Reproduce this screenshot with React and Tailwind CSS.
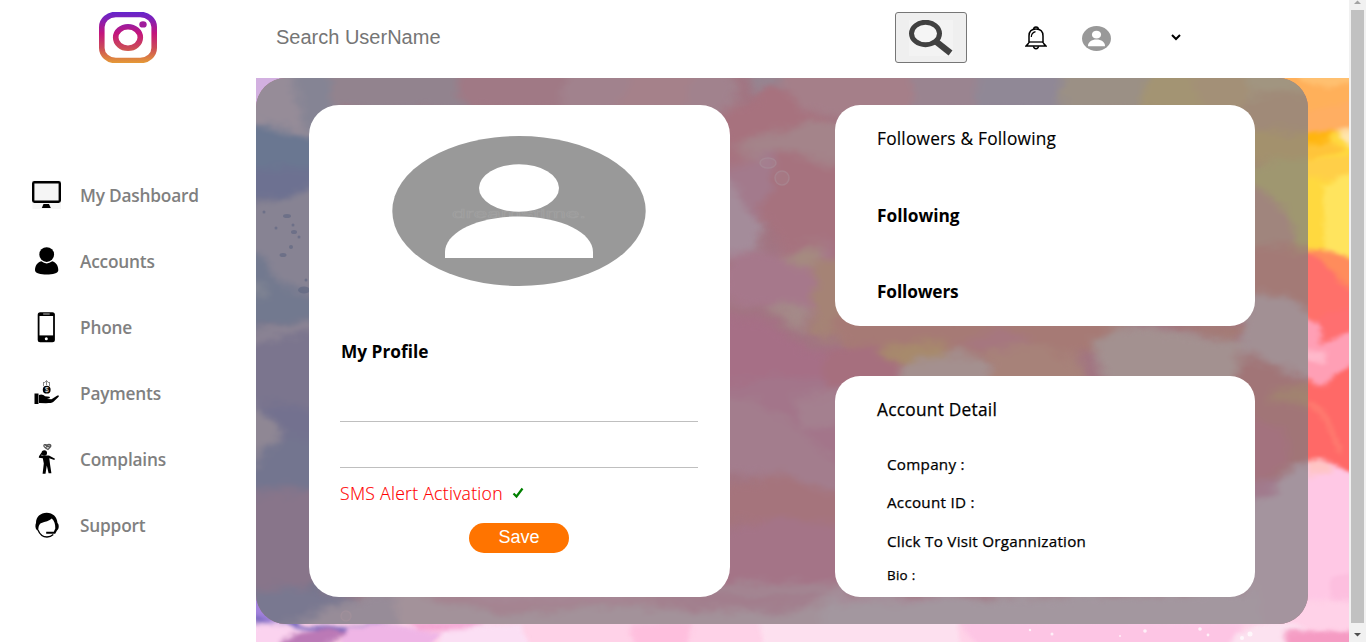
import React from "react";

const ARTBOX = "256 78 1093 564";

function PaintFilter({ id, scale, blur, soften }) {
  return (
    <filter id={id} x="-5%" y="-5%" width="110%" height="110%" colorInterpolationFilters="sRGB">
      <feGaussianBlur in="SourceGraphic" stdDeviation={blur} result="b" />
      <feTurbulence type="fractalNoise" baseFrequency="0.03 0.05" numOctaves="4" seed="8" result="n" />
      <feDisplacementMap in="b" in2="n" scale={scale} xChannelSelector="R" yChannelSelector="G" />
      <feGaussianBlur stdDeviation={soften} />
    </filter>
  );
}

function Backdrop() {
  return (
    <svg className="col-start-1 row-start-1 h-[564px] w-[1093px]" viewBox={ARTBOX} aria-hidden="true">
      <PaintFilter id="paint" scale={12} blur={2} soften={0.8} />
      <rect x="256" y="78" width="1093" height="564" fill="#ffd2e8" />
      <g filter="url(#paint)">
        <path d="M240 60H330V130H240Z" fill="#d2b0e0" />
        <path d="M1270 60H1370V155H1270Z" fill="#ffb05a" />
        <path d="M1300 80L1330 88 1370 78V60H1290Z" fill="#ffc070" />
        <path d="M1300 112L1370 95V135L1300 138Z" fill="#ffae62" />
        <path d="M1290 138L1370 130V300H1290Z" fill="#ffd93f" />
        <path d="M1290 136L1335 132 1328 140 1290 152Z" fill="#ffb50e" />
        <path d="M1290 150L1328 140 1345 148 1290 165Z" fill="#ffc43a" />
        <path d="M1338 132L1370 125V150L1345 143Z" fill="#ffe6b0" />
        <path d="M1300 160L1370 152V185L1300 176Z" fill="#ffcf48" />
        <path d="M1322 185L1370 170V260L1325 252Z" fill="#ffe45e" />
        <path d="M1290 250L1330 252 1370 272V390H1290Z" fill="#ff706a" />
        <path d="M1308 252L1336 252 1370 266V300L1340 280Z" fill="#ff8c5c" />
        <path d="M1300 315L1325 328 1332 338 1370 325V375L1322 386 1295 372Z" fill="#ff9fb5" />
        <path d="M1316 320L1370 300V325L1322 344Z" fill="#ff6f70" />
        <path d="M1300 345L1330 352 1322 364 1300 355Z" fill="#ffb9cb" />
        <path d="M1300 385L1324 383 1370 355V480L1300 480Z" fill="#ff6967" />
        <path d="M1308 400Q1330 405 1342 455L1335 448Q1328 415 1308 405Z" fill="#ff7d70" />
        <path d="M1300 465L1326 460 1345 472 1370 480V600H1300Z" fill="#ffc8e5" />
        <path d="M1308 463L1327 461 1333 472 1308 475Z" fill="#ffc5c5" />
        <path d="M1330 578L1370 568V605L1330 600Z" fill="#fdbfdf" />
        <path d="M240 550H280L300 626 390 624 330 634 250 622Z" fill="#7565bd" />
        <path d="M240 570H262L275 600 282 624 240 612Z" fill="#a282dc" />
        <path d="M250 624Q280 620 300 630L340 630 330 650H240V628Z" fill="#fbd3ef" />
        <path d="M284 636L330 628 350 632 318 650H282Z" fill="#bb79b6" />
        <path d="M345 626L400 626 440 632 430 650H340Z" fill="#efb5e6" />
        <path d="M405 620H485L470 630 415 628Z" fill="#f6a5d3" />
        <path d="M440 628L520 624 530 650H440Z" fill="#fbdff4" />
        <path d="M630 622H690V650H635Z" fill="#ffbfde" />
        <path d="M755 615H960V650H765Z" fill="#fde0ef" />
        <path d="M960 620H1240V650H980Z" fill="#fdc5e4" />
        <path d="M1235 632L1280 622 1310 630 1290 650H1230Z" fill="#fce2f0" />
        <path d="M1285 634L1370 626V650H1285Z" fill="#f59bc3" />
      </g>
      <g fill="#ffffff" opacity="0.75">
        <circle cx="1052" cy="634" r="1.5" /><circle cx="1145" cy="631" r="1.8" />
        <circle cx="1200" cy="629" r="1.8" /><circle cx="1208" cy="635" r="1.4" />
        <circle cx="1250" cy="634" r="2.5" /><circle cx="1242" cy="638" r="2" />
        <circle cx="1030" cy="630" r="1.2" /><circle cx="1120" cy="636" r="1" />
      </g>
    </svg>
  );
}

function PanelArt() {
  return (
    <svg className="col-start-1 row-start-1 h-[546px] w-[1052px]" viewBox="256 78 1052 546" aria-hidden="true">
      <PaintFilter id="muted" scale={18} blur={4} soften={1.2} />
      <rect x="256" y="78" width="1052" height="546" fill="#a27582" />
      <g filter="url(#muted)">
        {/* left edge */}
        <path d="M236 58H330V640H236Z" fill="#77758c" />
        <path d="M236 58H310L330 140 236 126Z" fill="#968c98" />
        <path d="M292 60H335V135L300 120Z" fill="#858494" />
        <path d="M236 121L285 130 330 138V180L236 168Z" fill="#6a7791" />
        <path d="M236 168L320 172 330 190 280 195 236 205Z" fill="#6d7191" />
        <path d="M236 210L285 195 330 180V300L275 285 236 240Z" fill="#878393" />
        <path d="M236 252L262 255 280 285 330 305V318L236 328Z" fill="#72798f" />
        <path d="M236 280L264 284 268 296 236 300Z" fill="#858894" />
        <path d="M236 336L330 318V328L236 345Z" fill="#908795" />
        <path d="M236 345L330 330V410L236 400Z" fill="#7b758e" />
        <path d="M236 400L330 410V445L275 440Z" fill="#73718f" />
        <path d="M236 398L262 408 284 440 255 462 236 468Z" fill="#8f8794" />
        <path d="M245 468L285 435 330 445V495H236Z" fill="#73758f" />
        <path d="M236 495L330 488V560L300 600 236 590Z" fill="#88758a" />
        <path d="M236 588L345 592 365 596 295 640H236Z" fill="#797890" />
        {/* top edge */}
        <path d="M330 60H470L500 112H330Z" fill="#92838e" />
        <path d="M455 60H570L600 112H465Z" fill="#a07985" />
        <path d="M570 60H735V115H560Z" fill="#a1828d" />
        <path d="M640 60H700L680 115H610Z" fill="#a5818a" />
        <path d="M745 60H790L800 95 750 88Z" fill="#968591" />
        <path d="M780 60H935L925 115H790Z" fill="#a57f89" />
        <path d="M910 60H1010V115H915Z" fill="#9a8490" />
        <path d="M982 60H1085L1070 115H975Z" fill="#908896" />
        <path d="M1065 60H1160V115H1060Z" fill="#9b9085" />
        <path d="M1150 60H1255L1230 115H1140Z" fill="#a39473" />
        <path d="M1190 60H1330V120H1205Z" fill="#a39077" />
        <path d="M1250 60H1330V90L1245 95Z" fill="#a19580" />
        {/* centre column */}
        <path d="M720 115L775 82 810 115 845 125V165L725 170Z" fill="#a7727e" />
        <path d="M730 150Q780 118 845 125V170L790 168Z" fill="#a4848a" />
        <path d="M715 170L775 152 790 165 770 215 740 220Z" fill="#a37a8c" />
        <path d="M782 150L850 170V270H790L760 215Z" fill="#a6727e" />
        <path d="M715 165L762 222 758 250 715 260Z" fill="#a48c9a" />
        <path d="M730 255L780 250 830 240 850 310 790 312 715 300Z" fill="#a6788b" />
        <path d="M780 252L825 243 820 268 800 270Z" fill="#a58a80" />
        <path d="M817 260H855V345L808 330Z" fill="#a58375" />
        <path d="M768 308L808 305 802 332Z" fill="#a48a88" />
        <path d="M715 310L770 320 808 350 860 345V400H715Z" fill="#a66f86" />
        <path d="M715 385L780 375 850 385V470L715 455Z" fill="#a3758a" />
        <path d="M720 395L760 405 800 430 845 470V500L780 480 715 470Z" fill="#a37d8d" />
        <path d="M715 490L770 475 850 495V530L790 520 715 525Z" fill="#a5747c" />
        <path d="M790 400L840 392V425L805 432Z" fill="#a4808f" />
        <path d="M715 530L780 518 850 525V600H715Z" fill="#a47487" />
        {/* band between the right cards */}
        <path d="M830 315H1130L1110 350 1040 365H850Z" fill="#a67a75" />
        <path d="M878 350L950 338 935 365 905 370Z" fill="#a78a6c" />
        <path d="M955 347L1000 325 1040 348 1000 358Z" fill="#a6777f" />
        <path d="M825 350L870 345 910 375 890 390H825Z" fill="#a66f7e" />
        <path d="M900 370L950 350 985 362 1000 390H900Z" fill="#a4908f" />
        <path d="M990 350L1050 345 1090 372 1060 395H990Z" fill="#a78279" />
        <path d="M1090 345L1120 322 1200 335 1280 350V390H1110Z" fill="#a39190" />
        <path d="M1160 322L1270 325 1230 340Z" fill="#a47b75" />
        {/* right edge */}
        <path d="M1245 95L1330 92V145H1245Z" fill="#a08a78" />
        <path d="M1245 128L1330 135V170L1245 160Z" fill="#a3916d" />
        <path d="M1245 165L1330 155V260L1275 260 1245 230Z" fill="#9f9770" />
        <path d="M1245 180L1285 205 1295 245 1245 260Z" fill="#a0857d" />
        <path d="M1245 245L1330 250V340L1245 300Z" fill="#a37a76" />
        <path d="M1245 292L1285 297 1330 320V385L1245 360Z" fill="#a29094" />
        <path d="M1235 358L1270 362 1330 392V500L1245 490Z" fill="#a17577" />
        <path d="M1270 388L1330 385V410L1265 398Z" fill="#a18370" />
        <path d="M1245 420L1285 430 1290 465 1245 485Z" fill="#a3727e" />
        <path d="M1245 485L1280 475 1278 490 1245 510Z" fill="#a17a8d" />
        <path d="M1240 512L1275 490 1290 468 1330 462V640H1240Z" fill="#a4949e" />
        {/* bottom edge */}
        <path d="M310 615L375 590H480V645H260Z" fill="#978c98" />
        <path d="M395 585H850V645H400Z" fill="#a3929a" />
        <path d="M390 590L580 592 700 596 850 590V602L740 612 620 604 590 608 500 613Z" fill="#a4828f" />
        <path d="M455 588L720 590 580 602 480 602Z" fill="#a68795" />
        <path d="M620 590H850L800 605 770 612 690 605Z" fill="#a27e8d" />
        <path d="M820 598L1000 595 1260 590V645H830Z" fill="#a3979f" />
        <path d="M825 590L990 595 900 605 840 602Z" fill="#a58d99" />
      </g>
      <g fill="#5d6580" opacity="0.6">
        <ellipse cx="287" cy="216" rx="4" ry="2" /><circle cx="293" cy="225" r="1.5" />
        <ellipse cx="294" cy="232" rx="3" ry="2" /><circle cx="299" cy="237" r="1.5" />
        <circle cx="291" cy="247" r="2" /><ellipse cx="283" cy="255" rx="3.5" ry="2" />
        <ellipse cx="304" cy="290" rx="6" ry="3.5" /><circle cx="276" cy="228" r="1.5" />
        <circle cx="264" cy="212" r="1.5" /><circle cx="306" cy="280" r="1.5" />
      </g>
      <g fill="#a9949d" fillOpacity="0.4" stroke="#a9949d" strokeWidth="1.5" opacity="0.5">
        <circle cx="782" cy="178" r="7" /><ellipse cx="768" cy="163" rx="8" ry="5" />
        <circle cx="346" cy="616" r="5" />
      </g>
    </svg>
  );
}

function InstagramMark() {
  return (
    <svg className="h-[51px] w-[58px]" viewBox="0 0 58 51">
      <defs>
        <linearGradient id="ig" gradientUnits="userSpaceOnUse" x1="0" y1="0" x2="0" y2="51">
          <stop offset="0" stopColor="#6425cc" />
          <stop offset="0.12" stopColor="#7d21ba" />
          <stop offset="0.42" stopColor="#c4157c" />
          <stop offset="0.7" stopColor="#cb4a58" />
          <stop offset="1" stopColor="#e59a37" />
        </linearGradient>
      </defs>
      <rect x="2.8" y="2.5" width="52.4" height="46" rx="14" ry="12.5" fill="none" stroke="url(#ig)" strokeWidth="5.6" />
      <ellipse cx="29" cy="25.5" rx="12.3" ry="10.8" fill="none" stroke="url(#ig)" strokeWidth="5.6" />
      <ellipse cx="44" cy="12.4" rx="3.7" ry="3.2" fill="#a01d9c" />
    </svg>
  );
}

function SearchGlyph() {
  return (
    <svg className="h-9 w-11" viewBox="0 0 44 36">
      <rect width="44" height="36" fill="#f3f3f3" />
      <path d="M27 21.5L41.500 33" stroke="#414141" strokeWidth="6.2" />
      <ellipse cx="16.5" cy="13.5" rx="14" ry="11.2" fill="#f5f5f5" stroke="#414141" strokeWidth="5" />
    </svg>
  );
}

function BellGlyph() {
  return (
    <svg className="h-6 w-[22px]" viewBox="0 0 22 24" fill="none" stroke="#000" strokeWidth="1.5">
      <path d="M8.7 3.4A2.3 2.3 0 0 1 13.3 3.4" />
      <path d="M4 17V10C4 5.500 6.700 3 11 3S18 5.500 18 10V17" />
      <path d="M3.800 16H18.200" strokeWidth="1.3" />
      <path d="M3.800 17L1.200 19.900H20.800L18.200 17" />
      <path d="M8.500 20.300C8.800 23.500 13.200 23.500 13.500 20.300" />
      <path d="M6.300 11C6.400 8 7.500 6.500 10.500 5.700" strokeWidth="1.2" />
    </svg>
  );
}

function Avatar({ className, mark }) {
  return (
    <svg className={className} viewBox="0 0 254 150" preserveAspectRatio="none">
      <ellipse cx="127" cy="75" rx="126.7" ry="75" fill="#999" />
      {mark && (
        <text x="60" y="82" fontSize="13" textLength="134" lengthAdjust="spacingAndGlyphs" fontFamily="Liberation Sans, sans-serif" fill="none" stroke="#a1a1a1" strokeWidth="0.6">
          dreamstime.
        </text>
      )}
      <ellipse cx="127" cy="52" rx="40" ry="23.7" fill="#fff" />
      <path d="M53 122V116C53 97 84 80.500 127 80.500S201 97 201 116V122Z" fill="#fff" />
    </svg>
  );
}

const glyphs = {
  monitor: (
    <svg className="h-[30px] w-[30px]" viewBox="0 0 30 30">
      <rect x="0.5" y="0.5" width="28.5" height="28.5" fill="#f6f6f6" />
      <rect x="1.2" y="2.2" width="26.6" height="19.6" rx="1.2" fill="#f5f5f5" stroke="#000" strokeWidth="2.4" />
      <path d="M11.500 24H17L18.800 28H9.800Z" />
    </svg>
  ),
  person: (
    <svg className="h-[30px] w-[30px]" viewBox="0 0 30 30">
      <circle cx="14.7" cy="8.6" r="7.4" />
      <path d="M9.300 15.300Q14.700 19.500 20.200 15.300C24.200 16.300 26.300 20 26.300 24.300C26.300 27.300 20.700 28.500 14.700 28.500S3 27.300 3 24.300C3 20 5.200 16.300 9.300 15.300Z" />
    </svg>
  ),
  phone: (
    <svg className="h-[31px] w-[30px]" viewBox="0 0 30 31">
      <rect x="5.7" y="0.2" width="17.2" height="30" rx="2.5" />
      <rect x="7.5" y="4" width="13.6" height="19.4" fill="#fff" />
      <path d="M11.200 2H17.700" stroke="#bbb" />
      <circle cx="14.3" cy="26.8" r="1.5" fill="#fff" />
    </svg>
  ),
  payment: (
    <svg className="h-[30px] w-[30px]" viewBox="0 0 30 30">
      <path d="M11.500 8V4M14.500 7V2.500M17.500 8V4M12.200 5L14.500 2.500 16.800 5" stroke="#888" strokeWidth="1" fill="none" />
      <circle cx="14.7" cy="11.7" r="3.9" />
      <text x="12.9" y="14" fontSize="6.5" fill="#fff" fontFamily="Liberation Sans, sans-serif">$</text>
      <path d="M2.500 15.500H6.500V26H2.500ZM7 17C9.500 15.700 11.500 17 13 18.200L17.500 18.800 18 20.100 15 21 19.500 21.200 25 17.700C27 17 27.300 17.900 26.400 18.900L21.500 23.800C20 25.300 18 24.800 14 25.300L7 24.900Z" />
    </svg>
  ),
  complain: (
    <svg className="h-[32px] w-[30px]" viewBox="0 0 30 32">
      <path d="M12 3.500C11 1.500 14 1 15 2C17 .8 20 1.500 18.500 4L16 6.500 13.500 5ZM13 2L18 4.500M13.500 4.500L18.500 2.500M14 3H19" fill="none" stroke="#555" strokeWidth="1.1" />
      <circle cx="12.3" cy="10" r="2.7" />
      <path d="M7 13.200L9.500 9.500 10.500 10.500 9.200 12.600 17 12.500 23 15.800 22.300 17.100 17.300 15.200 18 21 19.400 30.300H16.600L14.800 22.500 13.500 30.800H10.600L11.800 20.500 10.800 15.300 6.800 14.800Z" />
    </svg>
  ),
  support: (
    <svg className="h-[30px] w-[30px]" viewBox="0 0 30 30">
      <path d="M4 13C4 7 8.500 2.800 14.700 2.800S25 7 25.500 13C27.300 14.500 27.200 19 25 20.600L23.200 23.800H14.200V21.800H21.800L23.300 18.500C23.300 14 22.500 11 19.800 8.600C17.500 11 13 11.800 9.500 13C7.500 13.800 6.500 15.500 6.300 20.300H5C3.200 18.500 3 15 4 13Z" />
      <path d="M6 20C8 25 11.500 27 15 27C17.500 27 19.500 26.200 21.300 24.600" fill="none" stroke="#000" strokeWidth="1.3" />
    </svg>
  ),
};

const links = [
  ["My Dashboard", "monitor"],
  ["Accounts", "person"],
  ["Phone", "phone"],
  ["Payments", "payment"],
  ["Complains", "complain"],
  ["Support", "support"],
];

function Sidebar() {
  return (
    <aside className="flex w-64 shrink-0 flex-col bg-white">
      <div className="flex justify-center pt-3">
        <InstagramMark />
      </div>
      <nav className="flex flex-col pt-[99px]">
        {links.map(([label, icon]) => (
          <a key={label} className="flex h-[66px] items-center pl-8 text-[#808080]">
            <span className="flex w-12 items-center text-black">{glyphs[icon]}</span>
            <span className="pt-0.5 text-[17.3px] leading-6 font-semibold tracking-[-0.012em] whitespace-nowrap">{label}</span>
          </a>
        ))}
      </nav>
    </aside>
  );
}

function TopBar() {
  return (
    <header className="flex h-[78px] shrink-0 items-center bg-white">
      <input
        className="-mt-1 ml-5 h-10 w-[619px] font-['Liberation_Sans',sans-serif] text-xl outline-none placeholder:text-[#757575]"
        placeholder="Search UserName"
      />
      <button className="-mt-[3px] flex h-[51px] w-[72px] items-center justify-center rounded-[3px] border border-[#767676] bg-[#efefef]">
        <SearchGlyph />
      </button>
      <span className="-mt-[3px] ml-[58px]"><BellGlyph /></span>
      <Avatar className="-mt-0.5 ml-[35px] h-[25px] w-[29px]" />
      <svg className="-mt-1 ml-[59px] h-2 w-3" viewBox="0 0 12 8" fill="none" stroke="#000" strokeWidth="2">
        <path d="M2 2L6 6 10 2" />
      </svg>
    </header>
  );
}

function ProfileCard() {
  return (
    <section className="flex h-[492px] w-[421px] flex-col items-center rounded-[30px] bg-white pt-[31px] pr-px">
      <Avatar className="h-[150px] w-[254px] shrink-0" mark />
      <div className="mt-[54px] flex w-[358px] flex-col">
        <h2 className="pl-px text-[17.3px] leading-6 font-bold">My Profile</h2>
        <div className="h-[58px] border-b border-[#bfbfbf]" />
        <div className="h-[46px] border-b border-[#bfbfbf]" />
        <div className="mt-[13px] flex items-center text-[#f00]">
          <span className="text-[17.6px] leading-6 font-light tracking-[0.28px] [-webkit-text-stroke:0.15px_#f00]">SMS Alert Activation</span>
          <svg className="ml-[9px] h-3 w-3" viewBox="0 0 12 12" fill="none" stroke="green" strokeWidth="2.2">
            <path d="M1.500 6.500L4.500 9.500 10.500 1.500" />
          </svg>
        </div>
        <button className="mt-[18px] h-[30px] w-[100px] self-center rounded-full bg-[#ff7400] pb-0.5 font-['Liberation_Sans',sans-serif] text-lg leading-7 text-white">
          Save
        </button>
      </div>
    </section>
  );
}

function FollowCard() {
  return (
    <section className="flex h-[221px] w-[420px] flex-col rounded-[25px] bg-white pt-[22px] pl-[42px] text-[17.3px] leading-6">
      <p className="tracking-[0.22px] [-webkit-text-stroke:0.15px_#000]">Followers &amp; Following</p>
      <p className="mt-[53px] font-bold">Following</p>
      <p className="mt-[52px] font-bold tracking-[-0.15px]">Followers</p>
    </section>
  );
}

function AccountCard() {
  return (
    <section className="flex h-[221px] w-[420px] flex-col rounded-[25px] bg-white pt-[22px] pl-[42px]">
      <p className="text-[17.3px] leading-6 tracking-[0.26px] [-webkit-text-stroke:0.25px_#000]">Account Detail</p>
      <div className="flex flex-col pl-2.5 text-[15.2px] leading-5 tracking-[0.27px] [-webkit-text-stroke:0.25px_#000]">
        <p className="mt-8">Company :</p>
        <p className="mt-[18px]">Account ID :</p>
        <p className="mt-[19px]">Click To Visit Organnization</p>
        <p className="mt-[14px] text-[13.4px]">Bio :</p>
      </div>
    </section>
  );
}

function Scrollbar() {
  return (
    <div className="flex w-[17px] shrink-0 flex-col items-center bg-[#f1f1f1]">
      <svg className="h-[10px] w-[17px]" viewBox="0 0 17 10">
        <path d="M5 4L8.500 0.500 12 4Z" fill="#a3a3a3" />
      </svg>
      <div className="h-[613px] w-[13px] shrink-0 bg-[#c1c1c1]" />
      <svg className="h-[19px] w-[17px]" viewBox="0 0 17 19">
        <path d="M5 10H12L8.500 13.500Z" fill="#505050" />
      </svg>
    </div>
  );
}

export default function App() {
  return (
    <div className="flex h-[642px] w-[1366px] overflow-hidden bg-white font-['Open_Sans','Noto_Sans',sans-serif] text-black">
      <Sidebar />
      <div className="flex w-[1093px] shrink-0 flex-col">
        <TopBar />
        <main className="grid h-[564px] overflow-hidden">
          <Backdrop />
          <div className="col-start-1 row-start-1 grid h-[546px] w-[1052px] overflow-hidden rounded-[30px]">
            <PanelArt />
            <div className="z-10 col-start-1 row-start-1 flex justify-between pt-[27px] pr-[53px] pl-[53px]">
              <ProfileCard />
              <div className="flex flex-col gap-[50px]">
                <FollowCard />
                <AccountCard />
              </div>
            </div>
          </div>
        </main>
      </div>
      <Scrollbar />
    </div>
  );
}
